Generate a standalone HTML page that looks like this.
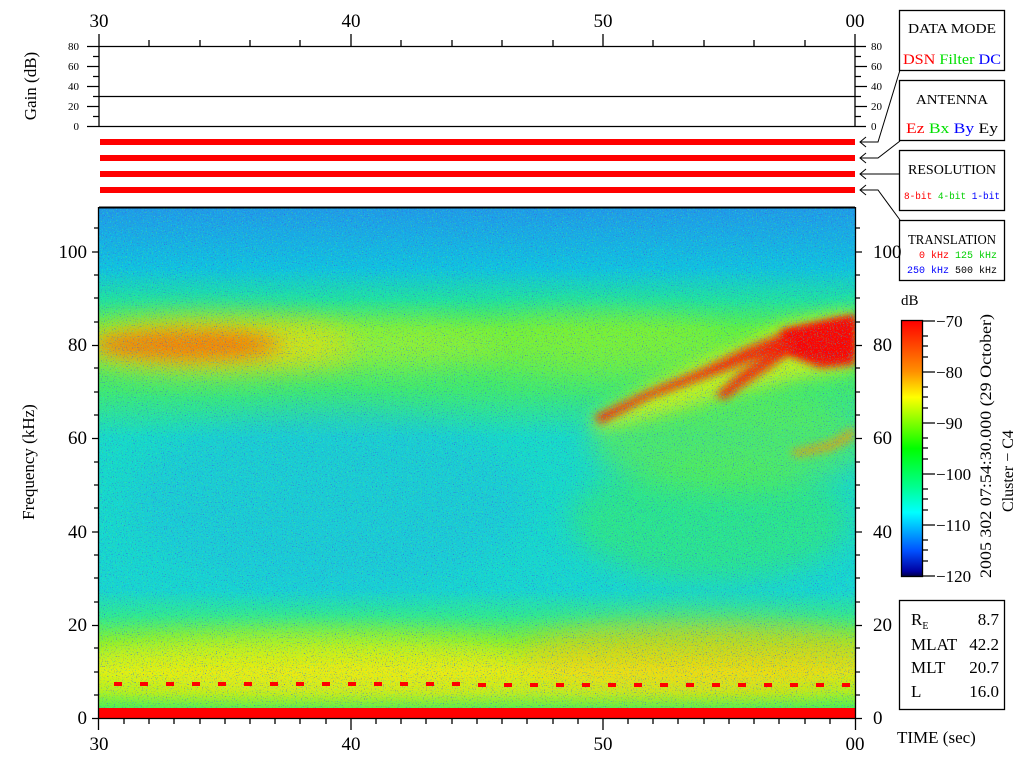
<!DOCTYPE html>
<html><head><meta charset="utf-8"><style>
html,body{margin:0;padding:0;background:#fff;}
svg{display:block;}
text{font-family:"Liberation Serif",serif;}
.m{font-family:"Liberation Mono",monospace;}
</style></head><body>
<svg width="1024" height="768" viewBox="0 0 1024 768" xmlns="http://www.w3.org/2000/svg">
<defs>
<filter id="b8" x="-50%" y="-50%" width="200%" height="200%"><feGaussianBlur stdDeviation="8"/></filter>
<filter id="b14" x="-50%" y="-50%" width="200%" height="200%"><feGaussianBlur stdDeviation="14"/></filter>
<filter id="b4" x="-50%" y="-50%" width="200%" height="200%"><feGaussianBlur stdDeviation="4"/></filter>
<filter id="noise" x="0" y="0" width="100%" height="100%">
<feTurbulence type="fractalNoise" baseFrequency="0.9" numOctaves="1" seed="3"/>
<feColorMatrix type="matrix" values="0 0 0 0 0.05  0 0 0 0 0.1  0 0 0 0 0.8  0 0 0 9 -5.7"/>
</filter>
<filter id="noise2" x="0" y="0" width="100%" height="100%">
<feTurbulence type="fractalNoise" baseFrequency="0.8" numOctaves="1" seed="9"/>
<feColorMatrix type="matrix" values="0 0 0 0 0.1  0 0 0 0 1  0 0 0 0 0.1  0 0 0 7 -4.2"/>
</filter>
<filter id="noise3" x="0" y="0" width="100%" height="100%">
<feTurbulence type="fractalNoise" baseFrequency="0.85" numOctaves="1" seed="21"/>
<feColorMatrix type="matrix" values="0 0 0 0 0.0  0 0 0 0 1  0 0 0 0 1  0 0 0 7 -4.2"/>
</filter>
<linearGradient id="base" x1="0" y1="0" x2="0" y2="1">
<stop offset="0" stop-color="#2098e8"/>
<stop offset="0.12" stop-color="#10c0e0"/>
<stop offset="0.18" stop-color="#20e0a0"/>
<stop offset="0.24" stop-color="#60f040"/>
<stop offset="0.36" stop-color="#40e870"/>
<stop offset="0.45" stop-color="#18d8c8"/>
<stop offset="0.75" stop-color="#18d4d0"/>
<stop offset="0.80" stop-color="#30e890"/>
<stop offset="0.85" stop-color="#80f030"/>
<stop offset="0.91" stop-color="#e0f010"/>
<stop offset="0.95" stop-color="#b0f020"/>
<stop offset="0.98" stop-color="#50f050"/>
<stop offset="1" stop-color="#50f050"/>
</linearGradient>
<linearGradient id="cb" x1="0" y1="0" x2="0" y2="1">
<stop offset="0" stop-color="#ff0000"/>
<stop offset="0.2" stop-color="#ff9000"/>
<stop offset="0.3" stop-color="#ffff00"/>
<stop offset="0.5" stop-color="#00ff00"/>
<stop offset="0.65" stop-color="#00ff90"/>
<stop offset="0.75" stop-color="#00ffff"/>
<stop offset="0.9" stop-color="#0050ff"/>
<stop offset="0.98" stop-color="#0000a0"/>
<stop offset="1" stop-color="#000040"/>
</linearGradient>
<clipPath id="sp"><rect x="99" y="207" width="756" height="511"/></clipPath>
</defs>

<g font-size="19" text-anchor="middle">
<text x="99" y="27">30</text><text x="351" y="27">40</text><text x="603" y="27">50</text><text x="855" y="27">00</text>
</g>
<g stroke="#000" stroke-width="1.3" fill="none">
<line x1="87" y1="46.5" x2="866" y2="46.5"/>
<line x1="87" y1="126.5" x2="866" y2="126.5"/>
<line x1="99" y1="34" x2="99" y2="126"/>
<line x1="855" y1="34" x2="855" y2="126"/>
<line x1="99" y1="96.5" x2="855" y2="96.5"/>
<path d="M149 40V46M200 40V46M250 40V46M300 40V46M351 34V46M401 40V46M452 40V46M502 40V46M553 40V46M603 34V46M653 40V46M704 40V46M754 40V46M805 40V46"/>
<path d="M93 56.5H99M87 66.5H99M93 76.5H99M87 86.5H99M93 96.5H99M87 106.5H99M93 116.5H99"/>
<path d="M855 56.5H861M855 66.5H867M855 76.5H861M855 86.5H867M855 96.5H861M855 106.5H867M855 116.5H861"/>
</g>
<g class="m" font-size="11" text-anchor="end">
<text x="79" y="50">80</text><text x="79" y="70">60</text><text x="79" y="90">40</text><text x="79" y="110">20</text><text x="79" y="130">0</text>
</g>
<g class="m" font-size="11">
<text x="871" y="50">80</text><text x="871" y="70">60</text><text x="871" y="90">40</text><text x="871" y="110">20</text><text x="871" y="130">0</text>
</g>
<text transform="translate(36,86) rotate(-90)" font-size="17" text-anchor="middle">Gain (dB)</text>

<g fill="#ff0000">
<rect x="100" y="139" width="755" height="6"/>
<rect x="100" y="155" width="755" height="6"/>
<rect x="100" y="171" width="755" height="6"/>
<rect x="100" y="187" width="755" height="6"/>
</g>
<g stroke="#000" stroke-width="1" fill="none">
<path d="M900 70L878 142H860M866 137L860 142L866 147"/>
<path d="M900 141L878 158H860M866 153L860 158L866 163"/>
<path d="M900 174H860M866 169L860 174L866 179"/>
<path d="M900 220L878 190H860M866 185L860 190L866 195"/>
</g>
<g stroke="#000" stroke-width="1.3" fill="#fff">
<rect x="899.5" y="10.5" width="105" height="60"/>
<rect x="899.5" y="80.5" width="105" height="60"/>
<rect x="899.5" y="150.5" width="105" height="60"/>
<rect x="899.5" y="220.5" width="105" height="60"/>
</g>
<g font-size="14" text-anchor="middle">
<text x="952" y="33" textLength="88" lengthAdjust="spacingAndGlyphs">DATA MODE</text>
<text x="952" y="104" textLength="72" lengthAdjust="spacingAndGlyphs">ANTENNA</text>
<text x="952" y="174" textLength="88" lengthAdjust="spacingAndGlyphs">RESOLUTION</text>
<text x="952" y="244" textLength="88" lengthAdjust="spacingAndGlyphs">TRANSLATION</text>
</g>
<text x="952" y="64" font-size="15" text-anchor="middle" textLength="98" lengthAdjust="spacingAndGlyphs"><tspan fill="#ff0000">DSN</tspan> <tspan fill="#00e000">Filter</tspan> <tspan fill="#0000ff">DC</tspan></text>
<text x="952" y="133" font-size="15" text-anchor="middle" textLength="92" lengthAdjust="spacingAndGlyphs"><tspan fill="#ff0000">Ez</tspan>  <tspan fill="#00e000">Bx</tspan>  <tspan fill="#0000ff">By</tspan>  <tspan fill="#000">Ey</tspan></text>
<text x="952" y="199" class="m" font-size="10" text-anchor="middle" textLength="96" lengthAdjust="spacingAndGlyphs"><tspan fill="#ff0000">8-bit</tspan> <tspan fill="#00d000">4-bit</tspan> <tspan fill="#0000ff">1-bit</tspan></text>
<text x="919" y="258" class="m" font-size="10"><tspan fill="#ff0000">0 kHz</tspan> <tspan fill="#00d000">125 kHz</tspan></text>
<text x="907" y="273" class="m" font-size="10"><tspan fill="#0000ff">250 kHz</tspan> <tspan fill="#000">500 kHz</tspan></text>

<g clip-path="url(#sp)">
<rect x="99" y="207" width="756" height="511" fill="url(#base)"/>
<ellipse cx="215" cy="345" rx="140" ry="26" fill="#ffd000" filter="url(#b14)" opacity="0.9"/>
<ellipse cx="190" cy="345" rx="95" ry="15" fill="#ff5000" filter="url(#b8)" opacity="0.6"/>
<ellipse cx="380" cy="345" rx="120" ry="22" fill="#c0f020" filter="url(#b14)" opacity="0.6"/>
<ellipse cx="600" cy="345" rx="130" ry="30" fill="#a0f020" filter="url(#b14)" opacity="0.5"/>
<ellipse cx="330" cy="500" rx="200" ry="90" fill="#20b0e8" filter="url(#b14)" opacity="0.3"/>
<ellipse cx="710" cy="520" rx="140" ry="60" fill="#40f050" filter="url(#b14)" opacity="0.5"/>
<ellipse cx="730" cy="440" rx="140" ry="50" fill="#70f030" filter="url(#b14)" opacity="0.6"/>
<path d="M590 420L650 385L720 352L790 322L855 310L855 370L800 378L740 392L670 412L600 430Z" fill="#e0f010" filter="url(#b8)" opacity="0.8"/>
<path d="M595 416L650 390L700 370L745 348L790 330L830 320L855 316L855 356L830 360L790 352L750 362L700 380L650 398L600 424Z" fill="#ff1000" filter="url(#b4)" opacity="0.85"/>
<path d="M780 330L855 316L855 365L820 368L790 356Z" fill="#ff0000" filter="url(#b4)" opacity="0.9"/>
<path d="M715 395L740 372L770 350L790 335L800 345L775 365L745 385L725 400Z" fill="#ff1000" filter="url(#b4)" opacity="0.8"/>
<path d="M790 450L830 440L855 425L855 440L830 452L795 458Z" fill="#ff9000" filter="url(#b4)" opacity="0.6"/>
<ellipse cx="300" cy="662" rx="220" ry="28" fill="#f0f010" filter="url(#b14)" opacity="0.55"/>
<ellipse cx="700" cy="655" rx="180" ry="35" fill="#ffc010" filter="url(#b14)" opacity="0.5"/>
<ellipse cx="480" cy="680" rx="350" ry="18" fill="#f8e010" filter="url(#b14)" opacity="0.45"/>
<rect x="99" y="207" width="756" height="511" filter="url(#noise3)" opacity="0.4"/>
<rect x="99" y="207" width="756" height="511" filter="url(#noise2)" opacity="0.4"/>
<rect x="99" y="207" width="756" height="511" filter="url(#noise)" opacity="0.8"/>
<g fill="#ff0000">
<rect x="114" y="682" width="8" height="4"/><rect x="140" y="682" width="8" height="4"/><rect x="166" y="682" width="8" height="4"/><rect x="192" y="682" width="8" height="4"/><rect x="218" y="682" width="8" height="4"/><rect x="244" y="682" width="8" height="4"/><rect x="270" y="682" width="8" height="4"/><rect x="296" y="682" width="8" height="4"/><rect x="322" y="682" width="8" height="4"/><rect x="348" y="682" width="8" height="4"/><rect x="374" y="682" width="8" height="4"/><rect x="400" y="682" width="8" height="4"/><rect x="426" y="682" width="8" height="4"/><rect x="452" y="682" width="8" height="4"/><rect x="478" y="683" width="8" height="4"/><rect x="504" y="683" width="8" height="4"/><rect x="530" y="683" width="8" height="4"/><rect x="556" y="683" width="8" height="4"/><rect x="582" y="683" width="8" height="4"/><rect x="608" y="683" width="8" height="4"/><rect x="634" y="683" width="8" height="4"/><rect x="660" y="683" width="8" height="4"/><rect x="686" y="683" width="8" height="4"/><rect x="712" y="683" width="8" height="4"/><rect x="738" y="683" width="8" height="4"/><rect x="764" y="683" width="8" height="4"/><rect x="790" y="683" width="8" height="4"/><rect x="816" y="683" width="8" height="4"/><rect x="842" y="683" width="8" height="4"/>
</g>
<rect x="99" y="708" width="756" height="10" fill="#ff0000"/>
</g>
<g stroke="#000" stroke-width="1.3" fill="none">
<line x1="99" y1="207.5" x2="855" y2="207.5" stroke-width="2"/>
<line x1="99" y1="718.5" x2="855" y2="718.5"/>
<line x1="98.5" y1="207" x2="98.5" y2="730"/>
<line x1="855.5" y1="207" x2="855.5" y2="730"/>
<path d="M92 718.5H99M92 625.5H99M92 532H99M92 438.5H99M92 345.5H99M92 252H99"/>
<path d="M94 695H99M94 672H99M94 648H99M94 602H99M94 578H99M94 555H99M94 508H99M94 485H99M94 462H99M94 415H99M94 392H99M94 368H99M94 322H99M94 298H99M94 275H99M94 228H99"/>
<path d="M855 718.5H862M855 625.5H862M855 532H862M855 438.5H862M855 345.5H862M855 252H862"/>
<path d="M855 695H860M855 672H860M855 648H860M855 602H860M855 578H860M855 555H860M855 508H860M855 485H860M855 462H860M855 415H860M855 392H860M855 368H860M855 322H860M855 298H860M855 275H860M855 228H860"/>
<path d="M124 718V724M149 718V724M174 718V724M200 718V724M225 718V724M250 718V724M275 718V724M300 718V724M326 718V724M351 718V730M376 718V724M401 718V724M426 718V724M452 718V724M477 718V724M502 718V724M527 718V724M553 718V724M578 718V724M603 718V730M628 718V724M653 718V724M678 718V724M704 718V724M729 718V724M754 718V724M779 718V724M805 718V724M830 718V724"/>
</g>
<g font-size="19" text-anchor="end">
<text x="87" y="724">0</text><text x="87" y="631">20</text><text x="87" y="538">40</text><text x="87" y="444">60</text><text x="87" y="351">80</text><text x="87" y="258">100</text>
</g>
<g font-size="19">
<text x="873" y="724">0</text><text x="873" y="631">20</text><text x="873" y="538">40</text><text x="873" y="444">60</text><text x="873" y="351">80</text><text x="873" y="258">100</text>
</g>
<g font-size="19" text-anchor="middle">
<text x="99" y="750">30</text><text x="351" y="750">40</text><text x="603" y="750">50</text><text x="855" y="750">00</text>
</g>
<text transform="translate(34,462) rotate(-90)" font-size="17" text-anchor="middle">Frequency (kHz)</text>
<text x="897" y="743" font-size="17">TIME (sec)</text>

<text x="901" y="305" font-size="15">dB</text>
<rect x="901.5" y="320.5" width="21" height="256" fill="url(#cb)" stroke="#000" stroke-width="1.3"/>
<g stroke="#000" stroke-width="1.2">
<path d="M922 321H935M922 372H935M922 423H935M922 474H935M922 525H935M922 576H935"/>
<path d="M922 336H928M922 346H928M922 357H928M922 387H928M922 397H928M922 408H928M922 438H928M922 448H928M922 459H928M922 489H928M922 499H928M922 510H928M922 540H928M922 550H928M922 561H928"/>
</g>
<g font-size="17">
<text x="936" y="327">−70</text><text x="936" y="378">−80</text><text x="936" y="429">−90</text><text x="936" y="480">−100</text><text x="936" y="531">−110</text><text x="936" y="582">−120</text>
</g>
<text transform="translate(991,578) rotate(-90)" font-size="16" textLength="264" lengthAdjust="spacingAndGlyphs">2005 302 07:54:30.000 (29 October)</text>
<text transform="translate(1013,512) rotate(-90)" font-size="16">Cluster − C4</text>

<rect x="899.5" y="600.5" width="105" height="109" fill="#fff" stroke="#000" stroke-width="1.3"/>
<g font-size="17">
<text x="911" y="625">R<tspan font-size="10" dy="4">E</tspan></text>
<text x="911" y="650">MLAT</text><text x="911" y="673">MLT</text><text x="911" y="697">L</text>
</g>
<g font-size="17" text-anchor="end">
<text x="999" y="625">8.7</text><text x="999" y="650">42.2</text><text x="999" y="673">20.7</text><text x="999" y="697">16.0</text>
</g>
</svg>
</body></html>
